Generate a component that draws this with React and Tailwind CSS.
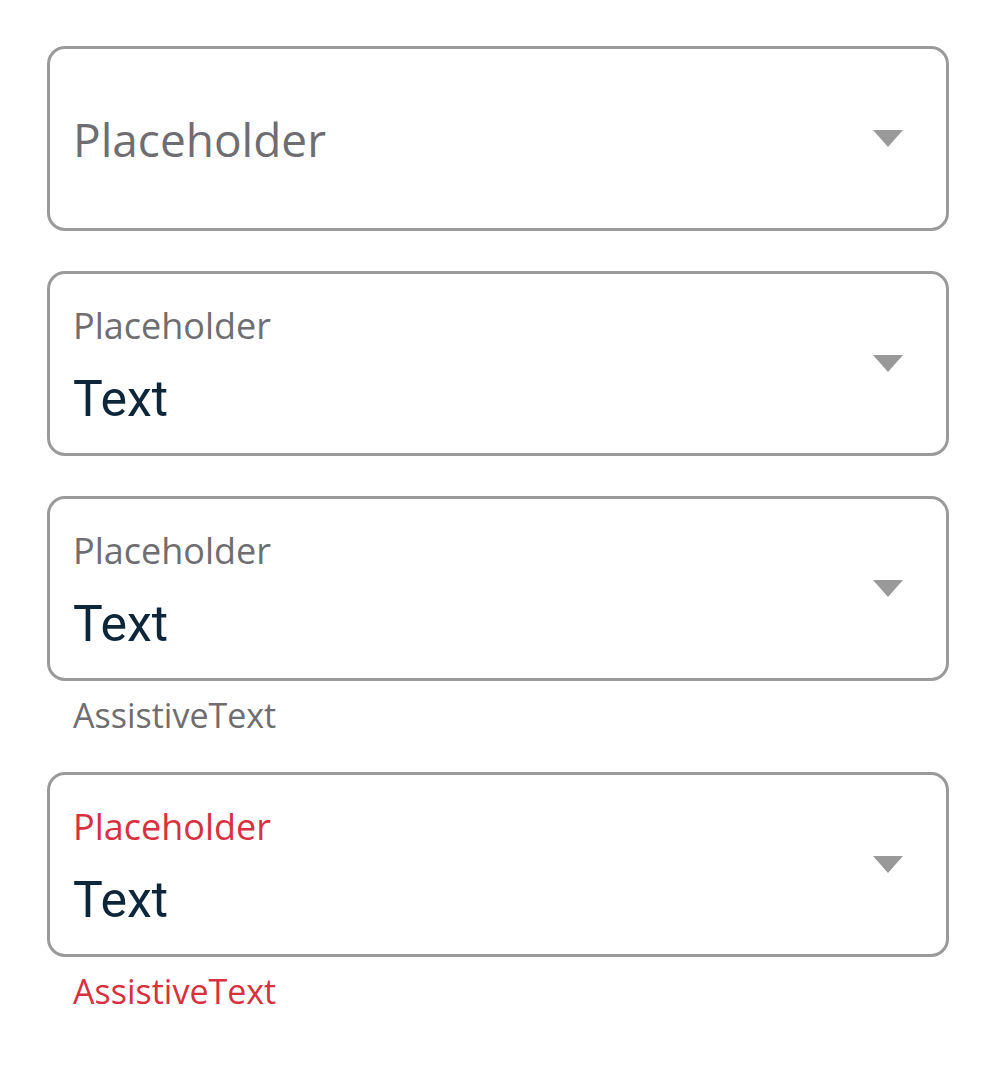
import React from 'react';

const Arrow = () => (
  <svg width="30" height="18" viewBox="0 0 30 18" className="shrink-0">
    <path d="M0 0 L30 0 L15 17 Z" fill="#999999" />
  </svg>
);

const SelectField = ({ label, value, assistive, error }) => {
  const labelColor = error ? 'text-[#d7313f]' : 'text-[#6e6e72]';
  return (
    <div className="flex flex-col">
      <div className="h-[185px] rounded-[18px] border-[3px] border-[#9a9a9a] bg-white pl-[23px] pr-[43px] flex items-center">
        <div className="flex-1 flex flex-col">
          {value ? (
            <div className="flex flex-col gap-[30px] pt-[4px]">
              <span
                className={`text-[36px] leading-[36px] ${labelColor}`}
                style={{ fontFamily: '"Open Sans", sans-serif' }}
              >
                {label}
              </span>
              <span
                className="text-[50px] leading-[50px] text-[#0e263a]"
                style={{ fontFamily: 'Roboto, sans-serif' }}
              >
                {value}
              </span>
            </div>
          ) : (
            <span
              className="text-[46px] leading-[46px] text-[#6e6e72]"
              style={{ fontFamily: '"Open Sans", sans-serif' }}
            >
              {label}
            </span>
          )}
        </div>
        <Arrow />
      </div>
      {assistive && (
        <span
          className={`pl-[26px] pt-[17px] text-[34px] leading-[34px] ${labelColor}`}
          style={{ fontFamily: '"Open Sans", sans-serif' }}
        >
          {assistive}
        </span>
      )}
    </div>
  );
};

export default function App() {
  return (
    <div className="w-[996px] h-[1068px] bg-white pt-[46px] px-[47px] flex flex-col gap-[40px]">
      <SelectField label="Placeholder" />
      <SelectField label="Placeholder" value="Text" />
      <SelectField label="Placeholder" value="Text" assistive="AssistiveText" />
      <SelectField label="Placeholder" value="Text" assistive="AssistiveText" error />
    </div>
  );
}
